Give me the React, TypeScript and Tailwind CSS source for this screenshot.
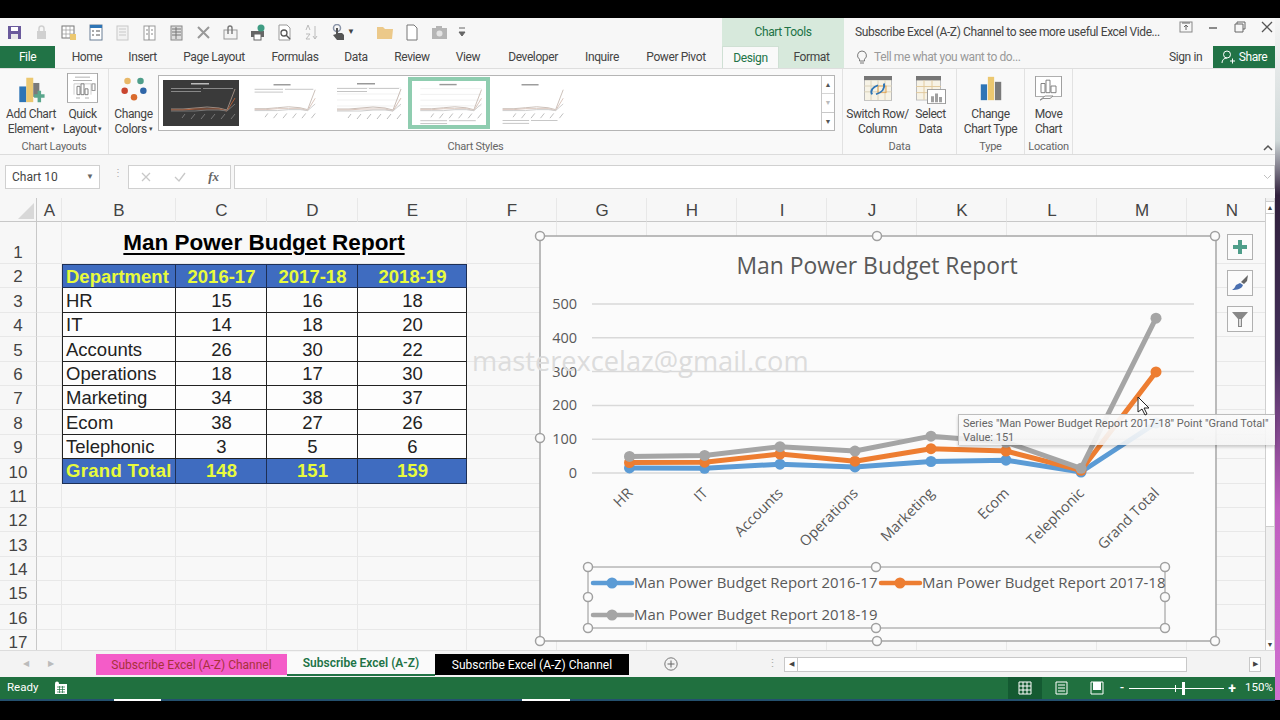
import type { ReactNode } from 'react';

const COLUMNS = ['A', 'B', 'C', 'D', 'E', 'F', 'G', 'H', 'I', 'J', 'K', 'L', 'M', 'N'];

const TABLE = [
  ['HR', 15, 16, 18],
  ['IT', 14, 18, 20],
  ['Accounts', 26, 30, 22],
  ['Operations', 18, 17, 30],
  ['Marketing', 34, 38, 37],
  ['Ecom', 38, 27, 26],
  ['Telephonic', 3, 5, 6],
] as const;

const TABS = [
  { label: 'Home', w: 'w-[64px]' },
  { label: 'Insert', w: 'w-[47px]' },
  { label: 'Page Layout', w: 'w-[96px]' },
  { label: 'Formulas', w: 'w-[66px]' },
  { label: 'Data', w: 'w-[56px]' },
  { label: 'Review', w: 'w-[56px]' },
  { label: 'View', w: 'w-[56px]' },
  { label: 'Developer', w: 'w-[74px]' },
  { label: 'Inquire', w: 'w-[64px]' },
  { label: 'Power Pivot', w: 'w-[84px]' },
];

// chart geometry, in page pixels
const XS = [629.5, 704.6, 780, 855, 931, 1006, 1081, 1156];
const CATEGORIES = ['HR', 'IT', 'Accounts', 'Operations', 'Marketing', 'Ecom', 'Telephonic', 'Grand Total'];
const SERIES = [
  { color: '#5b9bd5', values: [15, 14, 26, 18, 34, 38, 3, 148] },
  { color: '#ed7d31', values: [31, 32, 56, 35, 72, 65, 8, 299] },
  { color: '#a5a5a5', values: [49, 52, 78, 65, 109, 91, 14, 458] },
];
const toY = (v: number) => 473 - v * 0.338;

function Handle({ x, y }: { x: number; y: number }) {
  return <circle cx={x} cy={y} r={4.5} fill="#fbfbfb" stroke="#a0a0a0" strokeWidth={1.5} />;
}

function ChartDrawing() {
  const ticks = [500, 400, 300, 200, 100, 0];
  return (
    <svg className="absolute left-[530px] top-[26px]" width={700} height={426} viewBox="530 224 700 426">
      <rect x={540} y={236} width={676} height={405} fill="#fbfbfb" stroke="#a6a6a6" strokeWidth={1.5} />
      <text x={877} y={274} textAnchor="middle" fontSize={22.9} fill="#595959" fontFamily="Open Sans, sans-serif">
        Man Power Budget Report
      </text>
      {ticks.map((t) => (
        <g key={t}>
          <line x1={592} x2={1194} y1={toY(t)} y2={toY(t)} stroke="#d9d9d9" strokeWidth={1.5} />
          <text x={577} y={toY(t) + 5} textAnchor="end" fontSize={14.5} fill="#595959" fontFamily="Open Sans, sans-serif">
            {t}
          </text>
        </g>
      ))}
      {SERIES.map((s) => (
        <g key={s.color}>
          <polyline
            points={s.values.map((v, i) => `${XS[i]},${toY(v)}`).join(' ')}
            fill="none"
            stroke={s.color}
            strokeWidth={5}
            strokeLinejoin="round"
          />
          {s.values.map((v, i) => (
            <circle key={i} cx={XS[i]} cy={toY(v)} r={5.5} fill={s.color} />
          ))}
        </g>
      ))}
      {CATEGORIES.map((c, i) => (
        <text
          key={c}
          x={XS[i] + 4}
          y={494}
          textAnchor="end"
          fontSize={14.5}
          fill="#595959"
          fontFamily="Open Sans, sans-serif"
          transform={`rotate(-45 ${XS[i] + 4} 494)`}
        >
          {c}
        </text>
      ))}
      <rect x={588} y={567} width={577} height={61} fill="none" stroke="#a6a6a6" strokeWidth={1.2} />
      <g fontFamily="Open Sans, sans-serif" fontSize={14.95} fill="#595959">
        <text x={634} y={588}>Man Power Budget Report 2016-17</text>
        <text x={922} y={588}>Man Power Budget Report 2017-18</text>
        <text x={634} y={620}>Man Power Budget Report 2018-19</text>
      </g>
      <line x1={593} x2={632} y1={583} y2={583} stroke="#5b9bd5" strokeWidth={4.5} strokeLinecap="round" />
      <circle cx={612} cy={583} r={5.5} fill="#5b9bd5" />
      <line x1={881} x2={920} y1={583} y2={583} stroke="#ed7d31" strokeWidth={4.5} strokeLinecap="round" />
      <circle cx={900} cy={583} r={5.5} fill="#ed7d31" />
      <line x1={593} x2={632} y1={615} y2={615} stroke="#a5a5a5" strokeWidth={4.5} strokeLinecap="round" />
      <circle cx={612} cy={615} r={5.5} fill="#a5a5a5" />
      {[
        [588, 567], [876, 567], [1165, 567], [588, 597], [1165, 597], [588, 628], [876, 628], [1165, 628],
        [540, 236], [877, 236], [1215, 236], [540, 438], [540, 641], [877, 641], [1215, 641],
      ].map(([x, y]) => (
        <Handle key={`${x}-${y}`} x={x} y={y} />
      ))}
    </svg>
  );
}

function MiniChart({ dark, legendTop, grid }: { dark?: boolean; legendTop?: boolean; grid?: boolean }) {
  const a = dark ? '#9c8a80' : '#c9bdb6';
  return (
    <svg viewBox="0 0 76 46" className="h-full w-full">
      {dark && <rect width={76} height={46} fill="#3a3a3a" />}
      <rect x={28} y={3} width={18} height={1.5} fill={dark ? '#bbb' : '#999'} />
      {legendTop && (
        <g fill={dark ? '#888' : '#c4c4c4'}>
          <rect x={8} y={8} width={30} height={1} />
          <rect x={40} y={8} width={30} height={1} />
          <rect x={8} y={11} width={30} height={1} />
        </g>
      )}
      {grid && (
        <g stroke="#e2e2e2" strokeWidth={0.5}>
          <line x1={8} x2={72} y1={8} y2={8} />
          <line x1={8} x2={72} y1={14} y2={14} />
          <line x1={8} x2={72} y1={20} y2={20} />
          <line x1={8} x2={72} y1={26} y2={26} />
        </g>
      )}
      <polyline points={`8,29 20,29 32,28 44,27 56,28 64,30 72,9`} fill="none" stroke={a} strokeWidth={1} />
      <polyline points={`8,30 20,30 32,29 44,29 56,29 64,31 72,18`} fill="none" stroke={dark ? '#b05f3a' : '#d9c4ba'} strokeWidth={1} />
      <polyline points={`8,31 20,31 32,31 44,30 56,30 64,31 72,24`} fill="none" stroke={dark ? '#777' : '#ccc'} strokeWidth={1} />
      <g stroke={dark ? '#777' : '#bbb'} strokeWidth={1}>
        <line x1={22} x2={19} y1={34} y2={38} />
        <line x1={32} x2={28} y1={34} y2={39} />
        <line x1={42} x2={38} y1={34} y2={39} />
        <line x1={52} x2={48} y1={34} y2={39} />
        <line x1={62} x2={58} y1={34} y2={39} />
        <line x1={72} x2={68} y1={34} y2={39} />
      </g>
      {!legendTop && (
        <g fill="#c4c4c4">
          <rect x={8} y={41} width={28} height={1} />
          <rect x={38} y={41} width={28} height={1} />
          <rect x={8} y={44} width={28} height={1} />
        </g>
      )}
    </svg>
  );
}

function RibbonButton({ icon, lines, w, caret }: { icon: ReactNode; lines: [string, string]; w: string; caret?: boolean }) {
  return (
    <div className={`${w} flex h-[65px] shrink-0 flex-col items-center text-[12px] leading-[15px] tracking-[-0.4px] text-[#444]`}>
      <div className="flex h-[35px] items-start justify-center pt-[4px]">{icon}</div>
      <span className="whitespace-nowrap">{lines[0]}</span>
      <span className="whitespace-nowrap">
        {lines[1]}
        {caret && <span className="ml-[2px] align-middle text-[7px]">▾</span>}
      </span>
    </div>
  );
}

function RibbonGroup({ label, w, children }: { label: string; w: string; children: ReactNode }) {
  return (
    <div className={`${w} flex shrink-0 flex-col border-r border-[#e2e2e2]`}>
      <div className="flex h-[68px] justify-center pt-[3px]">{children}</div>
      <div className="mt-auto text-center text-[11px] leading-[14px] tracking-[-0.25px] text-[#666]">{label}</div>
    </div>
  );
}

const QAT: ReactNode[] = [
  <g key="save"><rect x={2} y={2} width={13} height={13} fill="#6a5a9c" /><rect x={5} y={3} width={7} height={4} fill="#fff" /><rect x={5} y={10} width={7} height={5} fill="#e8e8e8" /></g>,
  <g key="lock"><rect x={4} y={7} width={9} height={8} fill="#d0d0d0" /><path d="M6 7V4.5a2.5 2.5 0 0 1 5 0V7" fill="none" stroke="#d0d0d0" strokeWidth={1.5} /></g>,
  <g key="tablelock"><rect x={2} y={2} width={12} height={12} fill="#fff" stroke="#777" /><path d="M2 6h12M2 10h12M6 2v12M10 2v12" stroke="#999" strokeWidth={0.7} /><rect x={10} y={10} width={6} height={6} fill="#ecc870" /></g>,
  <g key="form"><rect x={3} y={1} width={12} height={15} fill="#fff" stroke="#6a7f95" /><rect x={3} y={1} width={12} height={3} fill="#2e75b6" /><path d="M5 7h2M9 7h4M5 11h2M9 11h4" stroke="#555" /></g>,
  <g key="doc1"><rect x={3} y={2} width={11} height={14} fill="#f2f2f2" stroke="#c8c8c8" /><path d="M5 5h7M5 8h7M5 11h7" stroke="#c8c8c8" /></g>,
  <g key="doc2"><rect x={3} y={2} width={11} height={14} fill="#fff" stroke="#999" /><path d="M8 2v14M5 6h2M10 6h2M5 10h2M10 10h2" stroke="#888" /></g>,
  <g key="doc3"><rect x={3} y={2} width={11} height={14} fill="#ddd" stroke="#888" /><path d="M4 5h9M4 8h9M4 11h9M8 3v12" stroke="#777" /></g>,
  <path key="x" d="M3 3l11 11M14 3L3 14" stroke="#999" strokeWidth={2} />,
  <g key="clip"><rect x={2} y={6} width={13} height={9} fill="#f4f4f4" stroke="#999" /><path d="M6 10V4a2 2 0 0 1 4 0v6" fill="none" stroke="#777" strokeWidth={1.4} /></g>,
  <g key="print"><rect x={2} y={7} width={13} height={6} fill="#666" /><rect x={5} y={10} width={7} height={6} fill="#fff" stroke="#666" /><circle cx={12} cy={4} r={3.5} fill="#3f9c83" /></g>,
  <g key="preview"><path d="M3 1h8l3 3v12H3z" fill="#fff" stroke="#999" /><circle cx={8} cy={9} r={3} fill="none" stroke="#555" strokeWidth={1.3} /><path d="M10 11l4 4" stroke="#555" strokeWidth={1.5} /></g>,
  <g key="sort" stroke="#bbb" fill="none"><path d="M3 6l2-5 2 5M3 10h4l-4 5h4" /><path d="M12 2v13M10 12l2 3 2-3" /></g>,
  <g key="touch"><circle cx={7} cy={4} r={3.5} fill="none" stroke="#8a94a8" strokeWidth={1.5} /><path d="M6 4h2v5h4l2 2v5H7L3 11l3-1z" fill="#555" /></g>,
];

function Qat() {
  return (
    <div className="flex w-[722px] shrink-0 items-center pl-[1px]">
      {QAT.map((icon, i) => (
        <svg key={i} width={27} height={17} viewBox="-5 0 27 17" className="shrink-0">
          {icon}
        </svg>
      ))}
      <span className="ml-[-5px] w-[19px] text-[8px] text-[#444]">▼</span>
      <svg width={27} height={17} viewBox="-4 0 27 17" className="ml-[6px] shrink-0">
        <path d="M1 15V3h6l2 2h8l-1 10z" fill="#ecc98a" />
      </svg>
      <svg width={26} height={17} viewBox="-5 0 26 17" className="shrink-0">
        <path d="M3 1h7l3 3v12H3z" fill="#fff" stroke="#777" />
      </svg>
      <svg width={28} height={17} viewBox="-5 0 28 17" className="shrink-0">
        <rect x={2} y={4} width={15} height={11} fill="#b5b5b5" />
        <rect x={6} y={2} width={6} height={3} fill="#b5b5b5" />
        <circle cx={9.5} cy={9.5} r={3} fill="#e4e4e4" />
      </svg>
      <svg width={14} height={12} viewBox="0 0 14 12" className="ml-[2px] shrink-0">
        <path d="M4 2h6M4 6h6l-3 4z" stroke="#666" fill="#666" />
      </svg>
    </div>
  );
}

function WindowControls() {
  return (
    <div className="ml-auto flex items-center gap-[14px] pr-[2px] pb-[10px]">
      <svg width={14} height={12} viewBox="0 0 14 12"><rect x={1} y={1} width={12} height={10} fill="none" stroke="#888" /><path d="M7 9V4M5 6l2-2 2 2M3 2h8" stroke="#666" fill="none" /></svg>
      <svg width={12} height={12} viewBox="0 0 12 12"><path d="M2 7h8" stroke="#666" strokeWidth={1.5} /></svg>
      <svg width={14} height={12} viewBox="0 0 14 12"><path d="M4 3V1h8v7h-2M2 3h8v8H2z" fill="none" stroke="#666" /></svg>
      <svg width={12} height={12} viewBox="0 0 12 12"><path d="M1 1l10 10M11 1L1 11" stroke="#555" strokeWidth={1.3} /></svg>
    </div>
  );
}

function Ribbon() {
  return (
    <div className="flex h-[87px] shrink-0 border-b border-[#dcdcdc] border-t border-t-[#dedede] bg-[#f9f9f9]">
      <RibbonGroup label="Chart Layouts" w="w-[109px]">
        <div className="flex">
          <RibbonButton
            w="w-[57px]"
            lines={['Add Chart', 'Element']}
            caret
            icon={
              <svg width={27} height={27} viewBox="0 0 30 31">
                <rect x={1} y={12} width={8} height={18} fill="#2e75b6" />
                <rect x={9} y={2} width={8} height={28} fill="#ecc870" />
                <rect x={17} y={8} width={7} height={16} fill="#7a7a7a" />
                <path d="M22 17h4v4h4v4h-4v5h-4v-5h-4v-4h4z" fill="#5aa68c" />
              </svg>
            }
          />
          <RibbonButton
            w="w-[46px]"
            lines={['Quick', 'Layout']}
            caret
            icon={
              <svg width={31} height={30} viewBox="0 0 31 36" preserveAspectRatio="none" className="mt-[-3px]">
                <rect x={0.5} y={0.5} width={30} height={35} fill="#fff" stroke="#a6a6a6" />
                <path d="M8 5h15M6 9h19" stroke="#aaa" />
                <path d="M7 26V13h17v13" fill="none" stroke="#ccc" />
                <path d="M10 26V16h3v10zM14 26V13h3v13zM18 26v-7h3v7z" fill="#fff" stroke="#777" />
                <rect x={25} y={13} width={3} height={8} fill="#fff" stroke="#888" />
                <path d="M9 30h4M18 30h4" stroke="#aaa" />
              </svg>
            }
          />
        </div>
      </RibbonGroup>
      <div className="flex w-[734px] shrink-0 flex-col border-r border-[#e2e2e2]">
        <div className="flex h-[62px] pt-[6px]">
          <div className="mt-[-3px] h-[65px]">
            <RibbonButton
              w="w-[49px]"
              lines={['Change', 'Colors']}
              caret
              icon={
                <svg width={28} height={26} viewBox="0 0 30 32">
                  <circle cx={7} cy={6} r={4} fill="#e8b869" />
                  <circle cx={23} cy={6} r={4} fill="#4f9e8a" />
                  <circle cx={3.5} cy={18} r={4} fill="#c9452f" />
                  <circle cx={26.5} cy={18} r={4} fill="#2f66a8" />
                  <circle cx={15} cy={26} r={4} fill="#d96a2c" />
                </svg>
              }
            />
          </div>
          <div className="flex h-[56px] w-[677px] shrink-0 items-center border border-[#b5b5b5] bg-white pl-[4px]">
            <div className="h-[46px] w-[76px] shrink-0">
              <MiniChart dark legendTop />
            </div>
            <div className="ml-[8px] h-[46px] w-[72px] shrink-0">
              <MiniChart legendTop />
            </div>
            <div className="ml-[10px] h-[46px] w-[76px] shrink-0">
              <MiniChart legendTop grid />
            </div>
            <div className="ml-[3px] h-[52px] w-[82px] shrink-0 border-[4px] border-[#8fcdb0] bg-white">
              <MiniChart grid />
            </div>
            <div className="ml-[5px] h-[46px] w-[72px] shrink-0">
              <MiniChart />
            </div>
            <div className="ml-auto flex h-full w-[13px] shrink-0 flex-col border-l border-[#c8c8c8] text-center text-[7px] leading-[18px] text-[#555]">
              <span className="h-[18px] border-b border-[#d5d5d5]">▲</span>
              <span className="h-[19px] border-b border-[#c8c8c8] text-[#bbb]">▼</span>
              <span className="flex-1">▼</span>
            </div>
          </div>
        </div>
        <div className="mt-auto text-center text-[11px] leading-[14px] tracking-[-0.25px] text-[#666]">Chart Styles</div>
      </div>
      <RibbonGroup label="Data" w="w-[114px]">
        <div className="flex">
          <RibbonButton
            w="w-[62px]"
            lines={['Switch Row/', 'Column']}
            icon={
              <svg width={28} height={25} viewBox="0 0 28 30" preserveAspectRatio="none">
                <rect x={0.5} y={0.5} width={27} height={29} fill="#f7f3e6" stroke="#bbb" />
                <rect width={28} height={5} fill="#767676" />
                <path d="M7 5v24M14 5v24M21 5v24M0 12h28M0 19h28" stroke="#d8d0b8" />
                <rect x={14} y={12} width={8} height={8} fill="none" stroke="#e2a24d" />
                <path d="M8 22c-2-5 1-9 6-11M20 9c1 6-2 11-8 13" fill="none" stroke="#2e75b6" strokeWidth={2} />
              </svg>
            }
          />
          <RibbonButton
            w="w-[44px]"
            lines={['Select', 'Data']}
            icon={
              <svg width={30} height={28} viewBox="0 0 30 32" preserveAspectRatio="none">
                <rect x={0.5} y={0.5} width={24} height={27} fill="#f7f3e6" stroke="#bbb" />
                <rect width={25} height={5} fill="#767676" />
                <path d="M8 5v22M16 5v22M0 12h25M0 19h25" stroke="#e0c79a" />
                <rect x={11.5} y={15.5} width={18} height={16} fill="#fff" stroke="#999" />
                <path d="M15 30v-7h3v7zM19 30v-10h3v10zM23 30v-6h3v6z" fill="#a0a0a0" />
              </svg>
            }
          />
        </div>
      </RibbonGroup>
      <RibbonGroup label="Type" w="w-[68px]">
        <RibbonButton
          w="w-[66px]"
          lines={['Change', 'Chart Type']}
          icon={
            <svg width={22} height={25} viewBox="0 0 28 30" preserveAspectRatio="none">
              <rect x={1} y={10} width={8} height={19} fill="#2e75b6" />
              <rect x={10} y={1} width={8} height={28} fill="#ecc870" />
              <rect x={19} y={7} width={8} height={22} fill="#7a7a7a" />
            </svg>
          }
        />
      </RibbonGroup>
      <RibbonGroup label="Location" w="w-[48px]">
        <RibbonButton
          w="w-[46px]"
          lines={['Move', 'Chart']}
          icon={
            <svg width={27} height={25} viewBox="0 0 27 30" preserveAspectRatio="none">
              <rect x={0.5} y={0.5} width={26} height={24} fill="#fff" stroke="#a0a0a0" />
              <path d="M6 20V9h4v11zM11 20V5h4v15zM16 20v-8h5v8z" fill="#fff" stroke="#777" />
              <path d="M5 29l5-5h8l-3 3H8z" fill="#fff" stroke="#888" />
            </svg>
          }
        />
      </RibbonGroup>
      <div className="ml-auto flex items-end pb-[3px] pr-[2px]">
        <svg width={10} height={7} viewBox="0 0 10 7"><path d="M1 6l4-4 4 4" fill="none" stroke="#555" strokeWidth={1.5} /></svg>
      </div>
    </div>
  );
}

function FormulaBar() {
  return (
    <div className="flex h-[43px] shrink-0 items-start bg-[#f7f7f7] pl-[5px] pt-[10px]">
      <div className="flex h-[24px] w-[95px] shrink-0 items-center justify-between border border-[#d0d0d0] bg-white pl-[6px] pr-[5px] text-[12px] text-[#444]">
        Chart 10
        <span className="text-[8px] text-[#666]">▼</span>
      </div>
      <div className="ml-[13px] w-[2px] pt-[5px] text-[10px] leading-[5px] text-[#aaa]">⋮</div>
      <div className="ml-[13px] flex h-[24px] w-[103px] shrink-0 items-center justify-between border border-[#d0d0d0] bg-white pl-[11px] pr-[11px]">
        <svg width={12} height={12} viewBox="0 0 12 12"><path d="M2 2l8 8M10 2l-8 8" stroke="#c8c8c8" strokeWidth={1.3} /></svg>
        <svg width={14} height={12} viewBox="0 0 14 12"><path d="M2 6l4 4 6-8" fill="none" stroke="#c8c8c8" strokeWidth={1.3} /></svg>
        <span className="font-['Liberation_Serif',serif] text-[13px] font-bold italic text-[#666]">fx</span>
      </div>
      <div className="ml-[3px] flex h-[24px] flex-1 items-center justify-end border border-[#d0d0d0] bg-white pr-[2px]">
        <svg width={9} height={6} viewBox="0 0 9 6"><path d="M1 1l3.5 3.5L8 1" fill="none" stroke="#c0c0c0" /></svg>
      </div>
    </div>
  );
}

function Sheet() {
  const line = 'border-r border-b border-[#e8e8e8]';
  const head = 'flex items-center justify-center border-r border-[#e8e8e8] border-b border-b-[#c8c8c8] pl-px pt-[3px] bg-[#f7f7f7] text-[17px] text-[#444]';
  const rowHead = 'flex items-end justify-center border-r border-b border-[#c8c8c8] border-b-[#e8e8e8] bg-[#f7f7f7] text-[17px] leading-[20px] text-[#444]';
  const cell = 'flex items-center border-r border-b border-[#222] bg-[#fdfdfd] pt-px text-[18.5px] text-[#222]';
  const blue = 'flex items-center border-r border-b border-[#1d2f55] bg-[#3f6cc0] pt-px text-[18.5px] font-bold text-[#e8fb3c]';

  return (
    <div className="grid h-full grid-cols-[37px_25px_114px_91px_91px_109px_repeat(9,90px)] grid-rows-[24px_42px_repeat(16,24.4px)] overflow-hidden bg-[#f8f8f8] font-['Liberation_Sans',sans-serif]">
      <div className="flex items-end justify-end border-r border-b border-[#c8c8c8] bg-[#f7f7f7] pr-[2px] pb-[2px]">
        <svg width={16} height={16} viewBox="0 0 16 16"><path d="M16 0v16H0z" fill="#d8d8d8" /></svg>
      </div>
      {COLUMNS.map((c) => (
        <div key={c} className={head}>{c}</div>
      ))}

      <div className={rowHead}>1</div>
      <div className={line} />
      <div className="col-span-4 flex items-center justify-center border-b border-r border-[#e8e8e8] pt-[1px] text-[22.5px] font-bold text-black underline underline-offset-[3px]">
        Man Power Budget Report
      </div>
      {COLUMNS.slice(5).map((c) => (
        <div key={c} className={line} />
      ))}

      <div className={rowHead}>2</div>
      <div className={line} />
      <div className={`${blue} border-l border-t pl-[3px]`}>Department</div>
      <div className={`${blue} justify-center border-t pl-px`}>2016-17</div>
      <div className={`${blue} justify-center border-t pl-px`}>2017-18</div>
      <div className={`${blue} justify-center border-t pl-px`}>2018-19</div>
      {COLUMNS.slice(5).map((c) => (
        <div key={c} className={line} />
      ))}

      {TABLE.map((row, i) => (
        <div key={row[0]} className="contents">
          <div className={rowHead}>{i + 3}</div>
          <div className={line} />
          <div className={`${cell} border-l pl-[3px]`}>{row[0]}</div>
          <div className={`${cell} justify-center pl-px`}>{row[1]}</div>
          <div className={`${cell} justify-center pl-px`}>{row[2]}</div>
          <div className={`${cell} justify-center pl-px`}>{row[3]}</div>
          {COLUMNS.slice(5).map((c) => (
            <div key={c} className={line} />
          ))}
        </div>
      ))}

      <div className={rowHead}>10</div>
      <div className={line} />
      <div className={`${blue} border-l pl-[3px] tracking-[0.3px] whitespace-nowrap`}>Grand Total</div>
      <div className={`${blue} justify-center pl-px`}>148</div>
      <div className={`${blue} justify-center pl-px`}>151</div>
      <div className={`${blue} justify-center pl-px`}>159</div>
      {COLUMNS.slice(5).map((c) => (
        <div key={c} className={line} />
      ))}

      {[11, 12, 13, 14, 15, 16, 17].map((n) => (
        <div key={n} className="contents">
          <div className={rowHead}>{n}</div>
          {COLUMNS.map((c) => (
            <div key={c} className={line} />
          ))}
        </div>
      ))}
    </div>
  );
}

function ChartSideButton({ children }: { children: ReactNode }) {
  return <div className="flex h-[26px] w-[26px] items-center justify-center border border-[#b0b0b0] bg-[#fbfbfb]">{children}</div>;
}

function SheetArea() {
  return (
    <div className="relative flex h-[452px] shrink-0">
      <div className="h-full w-[1265px] shrink-0">
        <Sheet />
      </div>
      <div className="flex h-full w-[10px] shrink-0 flex-col border-x border-[#cfcfcf] bg-[#f0f0f0] pt-[3px]">
        <div className="h-[13px] border-y border-[#cfcfcf] bg-white text-center text-[7px] leading-[12px] text-[#444]">▲</div>
        <div className="h-[313px] border-b border-[#cfcfcf] bg-white" />
        <div className="mt-auto h-[10px] bg-white text-center text-[7px] leading-[10px] text-[#444]">▼</div>
      </div>

      <ChartDrawing />

      <div className="absolute left-[472px] top-[145px] font-['Open_Sans',sans-serif] text-[27.2px] leading-[36px] text-[#dcdcdc]">
        masterexcelaz@gmail.com
      </div>

      <div className="absolute left-[1227px] top-[36px] flex flex-col gap-[10px]">
        <ChartSideButton>
          <svg width={14} height={14} viewBox="0 0 14 14"><path d="M5 0h4v5h5v4H9v5H5V9H0V5h5z" fill="#4f9e8a" /></svg>
        </ChartSideButton>
        <ChartSideButton>
          <svg width={18} height={18} viewBox="0 0 18 18"><path d="M17 1l-1 6-3 3-3-2z" fill="#666" /><path d="M9 9l3 2c-1 4-6 5-11 5 2-1 3-3 4-5z" fill="#4a6fb0" /></svg>
        </ChartSideButton>
        <ChartSideButton>
          <svg width={18} height={18} viewBox="0 0 18 18"><path d="M1 2h16l-6 7v8H7V9z" fill="#888" /><path d="M8 9h2v7H8z" fill="#ddd" /></svg>
        </ChartSideButton>
      </div>

      <div className="absolute left-[958px] top-[216px] h-[31px] w-[317px] overflow-hidden border-l border-t border-[#bdbdbd] bg-[linear-gradient(#fbfbfbf2,#f4f4f4e0)] pl-[4px] pt-[2px] text-[11px] leading-[14px] text-[#666] shadow-[0_2px_3px_#0003]">
        <div className="whitespace-nowrap">Series "Man Power Budget Report 2017-18" Point "Grand Total"</div>
        <div>Value: 151</div>
      </div>

      <svg className="absolute left-[1137px] top-[198px]" width={13} height={20} viewBox="0 0 13 20">
        <path d="M1 1v15l4-3 3 6 2-1-3-6h5z" fill="#fff" stroke="#222" />
      </svg>
    </div>
  );
}

function TabStrip() {
  return (
    <div className="flex h-[27px] shrink-0 items-end border-t border-[#dcdcdc] bg-[#f3f3f3] text-[12px]">
      <div className="flex h-full w-[96px] shrink-0 items-center gap-[19px] pl-[23px] text-[8px] text-[#bbb]">
        <span>◀</span>
        <span>▶</span>
      </div>
      <div className="mb-[2px] flex h-[21px] w-[191px] shrink-0 items-center justify-center bg-[#f45cc8] text-[#a8323a]">
        Subscribe Excel (A-Z) Channel
      </div>
      <div className="mb-[1px] flex h-[24px] w-[148px] shrink-0 items-center justify-center border-b-2 border-[#217346] bg-[#fafafa] font-semibold text-[#217346]">
        Subscribe Excel (A-Z)
      </div>
      <div className="mb-[2px] flex h-[21px] w-[194px] shrink-0 items-center justify-center bg-black text-white">
        Subscribe Excel (A-Z) Channel
      </div>
      <div className="ml-[35px] flex h-full w-[16px] shrink-0 items-center">
        <svg width={14} height={14} viewBox="0 0 14 14"><circle cx={7} cy={7} r={6.2} fill="none" stroke="#777" /><path d="M7 3.5v7M3.5 7h7" stroke="#666" /></svg>
      </div>
      <div className="ml-[87px] flex h-full w-[16px] shrink-0 items-center text-[11px] text-[#aaa]">⋮</div>
      <div className="ml-[1px] mb-[5px] flex h-[15px] w-[477px] shrink-0 items-stretch">
        <div className="flex w-[14px] items-center justify-center border border-[#c8c8c8] bg-white text-[7px] text-[#444]">◀</div>
        <div className="w-[389px] border-y border-r border-[#c8c8c8] bg-white" />
        <div className="ml-auto flex w-[12px] items-center justify-center border border-[#c8c8c8] bg-white text-[7px] text-[#444]">▶</div>
      </div>
    </div>
  );
}

function StatusBar() {
  return (
    <div className="flex h-[22px] shrink-0 items-center bg-[#20703f] text-[11.5px] text-white">
      <span className="ml-[7px] w-[47px]">Ready</span>
      <svg width={14} height={14} viewBox="0 0 14 14"><rect x={1} y={3} width={12} height={10} fill="#fff" /><circle cx={3} cy={2.5} r={2} fill="#fff" /><path d="M3 6h8M3 8.5h8M3 11h8M5.5 5v7M8.5 5v7" stroke="#20703f" strokeWidth={0.7} /></svg>
      <div className="ml-auto flex h-full items-center">
        <div className="flex h-full w-[34px] items-center justify-center bg-[#145a32]">
          <svg width={14} height={14} viewBox="0 0 14 14"><path d="M1 1h12v12H1zM1 5h12M1 9h12M5 1v12M9 1v12" fill="none" stroke="#fff" /></svg>
        </div>
        <div className="flex h-full w-[38px] items-center justify-center">
          <svg width={13} height={14} viewBox="0 0 13 14"><path d="M1 1h11v12H1zM3 4h7M3 7h7M3 10h7" fill="none" stroke="#fff" /></svg>
        </div>
        <div className="flex h-full w-[33px] items-center justify-center">
          <svg width={14} height={14} viewBox="0 0 14 14"><path d="M1 1h12v12H1z" fill="none" stroke="#fff" /><path d="M3 1h8v8H3z" fill="#fff" /></svg>
        </div>
        <span className="ml-[5px] w-[8px] text-center font-bold">-</span>
        <div className="relative ml-[3px] h-px w-[95px] bg-white">
          <div className="absolute left-[46px] top-[-3px] h-[7px] w-px bg-white" />
          <div className="absolute left-[53px] top-[-6px] h-[13px] w-[3px] bg-white" />
        </div>
        <span className="ml-[3px] w-[10px] text-center text-[14px] font-bold">+</span>
        <span className="ml-[8px] w-[30px] text-[11.5px]">150%</span>
      </div>
    </div>
  );
}

export default function App() {
  return (
    <div className="flex h-[720px] w-[1280px] flex-col overflow-hidden bg-black font-['Roboto',sans-serif]">
      <div className="h-[18px] shrink-0" />
      <div className="flex h-[682px] shrink-0">
        <div className="flex w-[1275px] shrink-0 flex-col bg-[#f7f7f7]">
          <div className="flex h-[28px] shrink-0 items-center">
            <Qat />
            <div className="flex h-full w-[122px] shrink-0 items-center justify-center bg-[#d7e9dc] text-[12px] tracking-[-0.4px] text-[#217346]">Chart Tools</div>
            <span className="ml-[11px] whitespace-nowrap text-[12px] tracking-[-0.4px] text-[#444]">Subscribe Excel (A-Z) Channel to see more useful Excel Vide...</span>
            <WindowControls />
          </div>
          <div className="flex h-[22px] shrink-0 items-stretch text-[12px] tracking-[-0.4px] text-[#444]">
            <div className="flex w-[55px] shrink-0 items-center justify-center bg-[#217346] text-white">File</div>
            {TABS.map((t) => (
              <div key={t.label} className={`${t.w} flex shrink-0 items-center justify-center`}>{t.label}</div>
            ))}
            <div className="w-[4px] shrink-0" />
            <div className="flex w-[122px] shrink-0 bg-[#d7e9dc]">
              <div className="flex w-[57px] items-center justify-center border-x border-t border-[#cfe0d4] bg-[#f9f9f9] text-[#217346]">Design</div>
              <div className="flex flex-1 items-center justify-center">Format</div>
            </div>
            <div className="ml-[12px] flex items-center gap-[6px] text-[#999]">
              <svg width={12} height={15} viewBox="0 0 12 15"><path d="M6 1a4.5 4.5 0 0 0-2.5 8.2V11h5V9.2A4.5 4.5 0 0 0 6 1zM4 13h4" fill="none" stroke="#777" /></svg>
              Tell me what you want to do...
            </div>
            <div className="ml-auto flex w-[44px] items-center">Sign in</div>
            <div className="flex w-[62px] shrink-0 items-center justify-center gap-[4px] bg-[#217346] text-white">
              <svg width={14} height={14} viewBox="0 0 14 14"><circle cx={6} cy={4.5} r={3.5} fill="none" stroke="#fff" /><path d="M1 13c0-3 2-5 5-5M9 11h5M11.5 8.5v5" fill="none" stroke="#fff" /></svg>
              Share
            </div>
          </div>
          <Ribbon />
          <FormulaBar />
          <SheetArea />
          <TabStrip />
          <StatusBar />
          <div className="flex h-[2px] shrink-0 bg-[#24506e]">
            <div className="ml-[114px] w-[47px] bg-white" />
            <div className="ml-[361px] w-[48px] bg-white" />
          </div>
        </div>
        <div className="h-full w-[5px] shrink-0 bg-[linear-gradient(#f4f4f4_0%,#cfd8d8_18%,#30203c_26%,#45305c_50%,#c060c0_72%,#d070d0_100%)]" />
      </div>
    </div>
  );
}
